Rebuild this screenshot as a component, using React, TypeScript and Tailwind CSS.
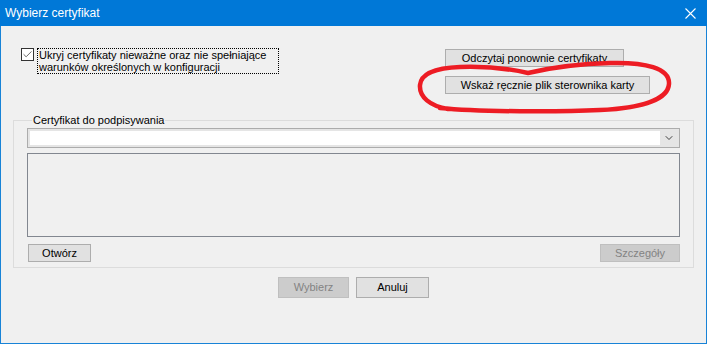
import { Check, ChevronDown } from "lucide-react";

function WinButton({
  label,
  className = "",
  disabled = false,
}: {
  label: string;
  className?: string;
  disabled?: boolean;
}) {
  return (
    <button
      type="button"
      disabled={disabled}
      className={
        "flex items-center justify-center border leading-none " +
        (disabled
          ? "bg-[#cccccc] border-[#bfbfbf] text-[#838383] "
          : "bg-[#e1e1e1] border-[#adadad] text-black ") +
        className
      }
    >
      {label}
    </button>
  );
}

export default function App() {
  return (
    <div className="relative w-[707px] h-[344px] flex flex-col bg-[#f0f0f0] text-[11px] text-black font-['Liberation_Sans',Arial,sans-serif]">
      {/* title bar */}
      <div className="h-[26px] shrink-0 bg-[#0078d7] flex items-center justify-between pl-[5px] pr-[11px] text-white text-[12px]">
        <span>Wybierz certyfikat</span>
        <svg width="11" height="11" viewBox="0 0 11 11" aria-hidden="true">
          <path d="M0.5 0.5 L10.5 10.5 M10.5 0.5 L0.5 10.5" stroke="white" strokeWidth="1.1" />
        </svg>
      </div>

      <div className="flex-1 flex flex-col border-x border-b border-[#1883d7]">
        {/* top row */}
        <div className="flex pt-[22px]">
          <div className="flex items-start pl-[20px]">
            <div className="w-[13px] h-[13px] border border-[#333333] bg-white flex items-center justify-center">
              <Check className="w-[11px] h-[11px] text-[#333333]" strokeWidth={1.6} />
            </div>
            <label className="ml-[3px] border border-dotted border-black px-[1px] leading-[12px] w-[242px]">
              Ukryj certyfikaty nieważne oraz nie spełniające
              <br />
              warunków określonych w konfiguracji
            </label>
          </div>
          <div className="ml-[166px] mt-[1px] flex flex-col gap-[9px]">
            <WinButton label="Odczytaj ponownie certyfikaty" className="w-[179px] h-[18px]" />
            <WinButton label="Wskaż ręcznie plik sterownika karty" className="w-[205px] h-[18px]" />
          </div>
        </div>

        {/* group box */}
        <fieldset className="mx-[12px] mt-[20px] border border-[#dcdcdc] px-[13px] pb-[5px]">
          <legend className="ml-[5px] px-[1px] leading-[13px]">Certyfikat do podpisywania</legend>
          <div className="mt-[1px] h-[20px] flex border border-[#acacac] bg-[#e5e5e5] p-[2px]">
            <div className="flex-1 bg-white" />
            <div className="w-[17px] flex items-center justify-center">
              <ChevronDown className="w-[12px] h-[12px] text-[#404040]" strokeWidth={2} />
            </div>
          </div>
          <div className="mt-[5px] h-[84px] border border-[#828790] bg-[#f0f0f0]" />
          <div className="mt-[7px] flex justify-between">
            <WinButton label="Otwórz" className="ml-[1px] w-[63px] h-[18px]" />
            <WinButton label="Szczegóły" disabled className="w-[80px] h-[18px]" />
          </div>
        </fieldset>

        {/* dialog buttons */}
        <div className="mt-[9px] flex justify-center gap-[7px]">
          <WinButton label="Wybierz" disabled className="w-[71px] h-[21px]" />
          <WinButton label="Anuluj" className="w-[73px] h-[21px]" />
        </div>
      </div>

      {/* red hand-drawn annotation */}
      <svg
        className="absolute left-0 top-0 pointer-events-none"
        width="707"
        height="344"
        viewBox="0 0 707 344"
        aria-hidden="true"
      >
        <path
          d="M448 109 C430 106 419 97 420 85 C421 74 434 68 460 67 C490 66 515 70 528 73 C545 69 570 64 610 63 C645 62 670 68 669 84 C668 100 640 108 600 110 C560 112 480 112 440 108"
          fill="none"
          stroke="#ed1c24"
          strokeWidth="4.5"
          strokeLinecap="round"
        />
      </svg>
    </div>
  );
}
